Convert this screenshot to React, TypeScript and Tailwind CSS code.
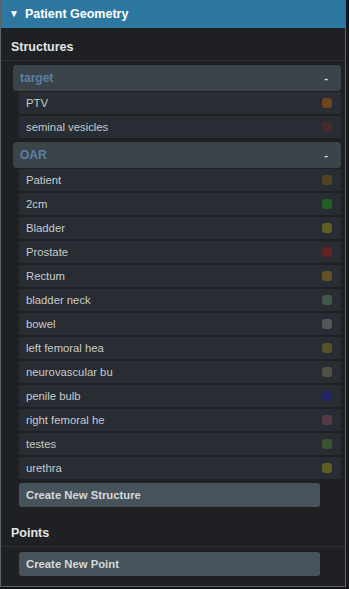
import React from "react";

type Structure = { name: string; color: string };

const groups: { title: string; items: Structure[] }[] = [
  {
    title: "target",
    items: [
      { name: "PTV", color: "#6c441f" },
      { name: "seminal vesicles", color: "#432c2b" },
    ],
  },
  {
    title: "OAR",
    items: [
      { name: "Patient", color: "#524324" },
      { name: "2cm", color: "#225e27" },
      { name: "Bladder", color: "#5e5e27" },
      { name: "Prostate", color: "#612226" },
      { name: "Rectum", color: "#664e25" },
      { name: "bladder neck", color: "#45574a" },
      { name: "bowel", color: "#545657" },
      { name: "left femoral hea", color: "#56532a" },
      { name: "neurovascular bu", color: "#515245" },
      { name: "penile bulb", color: "#212568" },
      { name: "right femoral he", color: "#573a48" },
      { name: "testes", color: "#3b5331" },
      { name: "urethra", color: "#5e5e23" },
    ],
  },
];

function SectionTitle({ label }: { label: string }) {
  return (
    <div className="h-[33px] pl-[10px] pt-[11px] border-b border-[#2c3033] text-[12.5px] leading-[16px] font-bold text-[#e4e6e7]">
      {label}
    </div>
  );
}

function ActionButton({ label }: { label: string }) {
  return (
    <button className="ml-[18px] w-[301px] h-[24px] rounded-[3px] bg-[#46535a] pl-[7px] text-left text-[11.3px] font-bold text-[#d5d9db]">
      {label}
    </button>
  );
}

export default function App() {
  return (
    <div
      className="w-[349px] h-[589px] bg-[#151617]"
      style={{ fontFamily: '"Liberation Sans", Arial, sans-serif' }}
    >
      <div className="w-[346px] h-[587px] border border-t-0 border-[#5c6266] bg-[#1e2023] flex flex-col">
        <div className="h-[28px] bg-[#2d78a0] flex items-center pl-[8px] gap-[6px] text-white">
          <span className="text-[10px] leading-none">▼</span>
          <span className="text-[12.5px] font-bold">Patient Geometry</span>
        </div>

        <SectionTitle label="Structures" />

        <div className="mt-[4px] flex flex-col">
          {groups.map((g) => (
            <div key={g.title} className="flex flex-col mb-[2px]">
              <div className="ml-[12px] mr-[4px] h-[26px] rounded-[4px] bg-[#3a4449] flex items-center justify-between pl-[7px] pr-[13px] mb-[1px]">
                <span className="text-[12px] font-bold text-[#5b80a8]">{g.title}</span>
                <span className="text-[11px] font-bold text-[#dfe3e5]">-</span>
              </div>
              {g.items.map((s) => (
                <div
                  key={s.name}
                  className="ml-[18px] mr-[4px] h-[22px] mb-[2px] bg-[#272d32] flex items-center justify-between pl-[7px] pr-[9px]"
                >
                  <span className="text-[11.3px] text-[#c7cbcd]">{s.name}</span>
                  <span
                    className="w-[10px] h-[10px] rounded-[3px]"
                    style={{ backgroundColor: s.color }}
                  />
                </div>
              ))}
            </div>
          ))}
        </div>

        <ActionButton label="Create New Structure" />

        <div className="mt-[7px]">
          <SectionTitle label="Points" />
        </div>

        <div className="mt-[4px]">
          <ActionButton label="Create New Point" />
        </div>
      </div>
    </div>
  );
}
